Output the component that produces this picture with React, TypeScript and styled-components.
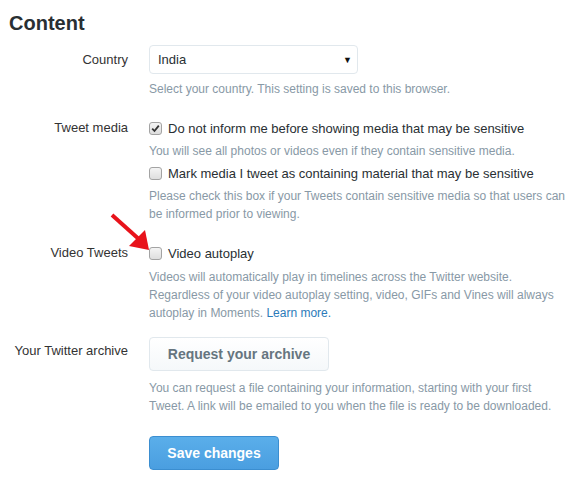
import React from "react";
import styled, { createGlobalStyle } from "styled-components";

const Global = createGlobalStyle`
  html, body { margin: 0; padding: 0; background: #fff; }
  body { font-family: "Liberation Sans", Arial, sans-serif; color: #292f33; }
`;

const Page = styled.div`
  position: relative;
  width: 583px;
  height: 478px;
  overflow: hidden;
`;

const Heading = styled.h2`
  margin: 0;
  padding: 11px 0 0 9px;
  font-size: 20px;
  line-height: 24px;
  font-weight: bold;
  color: #292f33;
`;

const Form = styled.div`
  display: grid;
  grid-template-columns: 128px 1fr;
  column-gap: 21px;
  padding-right: 8px;
`;

const Label = styled.div<{ $top: number; $mt: number }>`
  text-align: right;
  font-size: 13px;
  line-height: 20px;
  color: #333;
  padding-top: ${(p) => p.$top}px;
  margin-top: ${(p) => p.$mt}px;
`;

const Controls = styled.div<{ $mt: number }>`
  display: flex;
  flex-direction: column;
  align-items: flex-start;
  margin-top: ${(p) => p.$mt}px;
`;

const SelectBox = styled.div`
  box-sizing: border-box;
  width: 209px;
  height: 29px;
  border: 1px solid #e1e8ed;
  border-radius: 4px;
  display: flex;
  align-items: center;
  justify-content: space-between;
  padding: 0 5px 0 8px;
  font-size: 13px;
  color: #292f33;
`;

const Caret = styled.span`
  font-size: 9px;
  color: #111;
`;

const Help = styled.p<{ $mt: number }>`
  margin: ${(p) => p.$mt}px 0 0 0;
  font-size: 12px;
  line-height: 18px;
  color: #8899a6;
`;

const Link = styled.a`
  color: #2b7bb9;
  text-decoration: none;
`;

const CheckRow = styled.label<{ $mt?: number }>`
  display: flex;
  align-items: center;
  gap: 6px;
  height: 20px;
  margin-top: ${(p) => p.$mt ?? 0}px;
  font-size: 13px;
  color: #292f33;
`;

const Box = styled.span`
  box-sizing: border-box;
  width: 13px;
  height: 13px;
  border: 1px solid #a3a3a3;
  border-radius: 3px;
  background: linear-gradient(#f4f4f4, #dedede);
  display: flex;
  align-items: center;
  justify-content: center;
`;

const GhostButton = styled.button`
  box-sizing: border-box;
  height: 34px;
  width: 180px;
  border: 1px solid #e1e8ed;
  border-radius: 4px;
  background: linear-gradient(#fff, #f5f8fa);
  font-family: inherit;
  font-size: 14px;
  font-weight: bold;
  color: #66757f;
  padding: 0;
`;

const PrimaryButton = styled.button<{ $mt: number }>`
  box-sizing: border-box;
  height: 34px;
  width: 130px;
  margin-top: ${(p) => p.$mt}px;
  border: 1px solid #3b8ed0;
  border-radius: 4px;
  background: linear-gradient(#5aaeea, #4a9ee0);
  font-family: inherit;
  font-size: 14px;
  font-weight: bold;
  color: #fff;
  padding: 0;
`;

const Arrow = styled.svg`
  position: absolute;
  left: 100px;
  top: 205px;
`;

function Check({ checked }: { checked?: boolean }) {
  return (
    <Box>
      {checked && (
        <svg width="9" height="9" viewBox="0 0 9 9">
          <path d="M1.2 4.6 L3.5 7 L7.8 1.6" fill="none" stroke="#333" strokeWidth="1.8" />
        </svg>
      )}
    </Box>
  );
}

export default function App() {
  return (
    <Page>
      <Global />
      <Heading>Content</Heading>
      <Form>
        <Label $top={5} $mt={10}>Country</Label>
        <Controls $mt={10}>
          <SelectBox>
            <span>India</span>
            <Caret>▼</Caret>
          </SelectBox>
          <Help $mt={6}>Select your country. This setting is saved to this browser.</Help>
        </Controls>

        <Label $top={0} $mt={20}>Tweet media</Label>
        <Controls $mt={20}>
          <CheckRow>
            <Check checked />
            Do not inform me before showing media that may be sensitive
          </CheckRow>
          <Help $mt={4}>You will see all photos or videos even if they contain sensitive media.</Help>
          <CheckRow $mt={3}>
            <Check />
            Mark media I tweet as containing material that may be sensitive
          </CheckRow>
          <Help $mt={4}>
            Please check this box if your Tweets contain sensitive media so that users can be informed prior to viewing.
          </Help>
        </Controls>

        <Label $top={0} $mt={20}>Video Tweets</Label>
        <Controls $mt={20}>
          <CheckRow>
            <Check />
            Video autoplay
          </CheckRow>
          <Help $mt={5}>
            Videos will automatically play in timelines across the Twitter website.
            <br />
            Regardless of your video autoplay setting, video, GIFs and Vines will always autoplay in Moments. <Link href="#">Learn more.</Link>
          </Help>
        </Controls>

        <Label $top={4} $mt={15}>Your Twitter archive</Label>
        <Controls $mt={15}>
          <GhostButton>Request your archive</GhostButton>
          <Help $mt={8}>
            You can request a file containing your information, starting with your first
            <br />
            Tweet. A link will be emailed to you when the file is ready to be downloaded.
          </Help>
          <PrimaryButton $mt={21}>Save changes</PrimaryButton>
        </Controls>
      </Form>
      <Arrow width="60" height="50" viewBox="0 0 60 50">
        <line x1="12" y1="10" x2="41" y2="36" stroke="#e8131b" strokeWidth="4" />
        <polygon points="49,45 29,41 45,25" fill="#e8131b" />
      </Arrow>
    </Page>
  );
}
